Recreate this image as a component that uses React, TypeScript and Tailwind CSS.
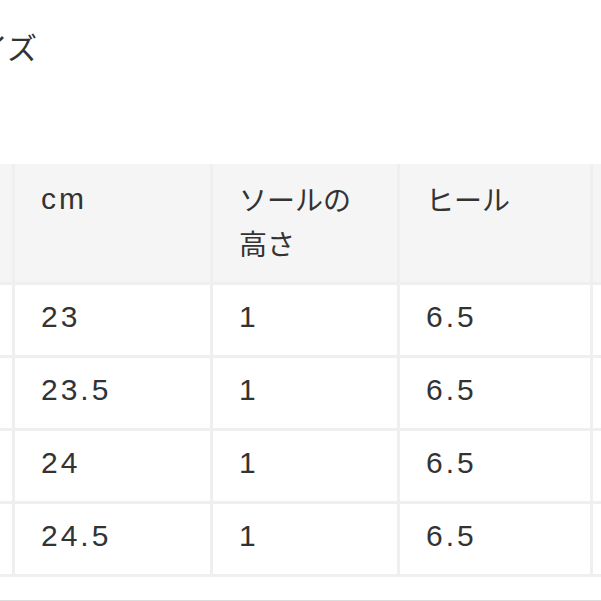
import React from "react";

const font = { fontFamily: '"Liberation Sans", "Noto Sans CJK JP", sans-serif' };
const jp = { fontFamily: '"Noto Sans CJK JP", sans-serif' };

const rows = [
  ["23", "1", "6.5"],
  ["23.5", "1", "6.5"],
  ["24", "1", "6.5"],
  ["24.5", "1", "6.5"],
];

function Row({ cells, header }: { cells: React.ReactNode[]; header?: boolean }) {
  const base = header
    ? "h-[118px] bg-[#f5f5f5] pt-[13px]"
    : "h-[70px] bg-white pt-[10px]";
  return (
    <div className="flex border-b-[3px] border-[#efefef]">
      <div className={`w-[105px] shrink-0 border-r-[3px] border-[#efefef] ${base}`} />
      <div className={`w-[198px] shrink-0 border-r-[3px] border-[#efefef] pl-[26px] ${base}`}>{cells[0]}</div>
      <div className={`w-[187px] shrink-0 border-r-[3px] border-[#efefef] pl-[26px] ${base}`}>{cells[1]}</div>
      <div className={`w-[193px] shrink-0 border-r-[3px] border-[#efefef] pl-[26px] ${base}`}>{cells[2]}</div>
      <div className={`w-[100px] shrink-0 ${base}`} />
    </div>
  );
}

export default function App() {
  const jpCls = "text-[28px] tracking-normal";
  return (
    <div
      className="w-[601px] h-[601px] overflow-hidden bg-white text-[#333333] text-[30px] leading-[44px]"
      style={font}
    >
      <div className="pt-[26px] ml-[-52px] leading-[40px] h-[66px]" style={jp}>
        サイズ
      </div>
      <div className="mt-[98px] ml-[-90px] w-[900px] tracking-[3px]">
        <Row
          header
          cells={[
            "cm",
            <div className={jpCls} style={jp}>ソールの<br />高さ</div>,
            <div className={jpCls} style={jp}>ヒール</div>,
          ]}
        />
        {rows.map((r, i) => (
          <Row key={i} cells={r} />
        ))}
      </div>
      <div className="mt-[23px] border-t border-[#dcdcdc]" />
    </div>
  );
}
